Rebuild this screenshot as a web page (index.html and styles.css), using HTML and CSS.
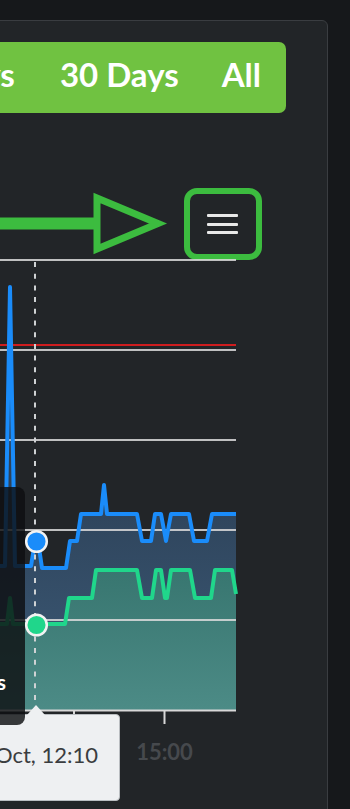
FILE: index.html
```html
<!DOCTYPE html>
<html lang="en">
<head>
<meta charset="utf-8">
<title>Chart</title>
<link rel="stylesheet" href="styles.css">
</head>
<body>
<div class="card">
  <div class="ranges">
    <span class="range range-first">7 Days</span>
    <span class="range">30 Days</span>
    <span class="range">All</span>
  </div>
  <div class="toolbar">
    <svg class="arrow" viewBox="0 0 170 72" width="170" height="72">
      <rect class="arrow-fill" x="0" y="29.5" width="98" height="12"/>
      <polygon class="arrow-head" points="97,10 97,61 158,35.5"/>
    </svg>
    <button class="menu-btn" type="button" aria-label="Chart menu">
      <span class="menu-line"></span>
      <span class="menu-line"></span>
      <span class="menu-line"></span>
    </button>
  </div>
  <div class="chart">
    <svg class="plot" width="240" height="549" viewBox="0 0 240 549">
      <defs>
        <linearGradient id="blueFill" gradientUnits="userSpaceOnUse" x1="0" y1="225" x2="0" y2="450">
          <stop offset="0" stop-color="#2d4259"/>
          <stop offset="1" stop-color="#3d5b78"/>
        </linearGradient>
        <linearGradient id="greenFill" gradientUnits="userSpaceOnUse" x1="0" y1="310" x2="0" y2="450">
          <stop offset="0" stop-color="#387670"/>
          <stop offset="1" stop-color="#4c8b86"/>
        </linearGradient>
      </defs>
      <path class="area-blue" d="M0,306 L5,306 L10,27 L15,306 L31,306 L35,281 L38,281 L42,308 L66,308 L70,281 L77,281 L81,254 L101,254 L104,225 L107,254 L137,254 L142,281 L151,281 L155,254 L161,254 L166,281 L171,254 L189,254 L194,281 L207,281 L212,254 L236,254 L236,450 L0,450 Z"/>
      <path class="area-green" d="M0,364 L7,364 L10,338 L13,364 L65,364 L69,338 L92,338 L96,310 L137,310 L142,338 L152,338 L156,310 L161,310 L165,338 L167,338 L171,310 L190,310 L195,338 L211,338 L215,310 L232,310 L236,334 L236,450 L0,450 Z"/>
      <g class="grid">
        <line x1="0" y1="0" x2="236" y2="0"/>
        <line x1="0" y1="90" x2="236" y2="90"/>
        <line x1="0" y1="180" x2="236" y2="180"/>
        <line x1="0" y1="270" x2="236" y2="270"/>
        <line x1="0" y1="360" x2="236" y2="360"/>
      </g>
      <line class="axis" x1="0" y1="450.5" x2="236" y2="450.5"/>
      <line class="tick" x1="164.5" y1="451" x2="164.5" y2="464"/>
      <line class="tick" x1="74" y1="451" x2="74" y2="454"/>
      <line class="threshold" x1="0" y1="85" x2="236" y2="85"/>
      <path class="line-blue" d="M0,306 L5,306 L10,27 L15,306 L31,306 L35,281 L38,281 L42,308 L66,308 L70,281 L77,281 L81,254 L101,254 L104,225 L107,254 L137,254 L142,281 L151,281 L155,254 L161,254 L166,281 L171,254 L189,254 L194,281 L207,281 L212,254 L236,254"/>
      <path class="line-green" d="M0,364 L7,364 L10,338 L13,364 L65,364 L69,338 L92,338 L96,310 L137,310 L142,338 L152,338 L156,310 L161,310 L165,338 L167,338 L171,310 L190,310 L195,338 L211,338 L215,310 L232,310 L236,334"/>
      <line class="crosshair" x1="35" y1="2" x2="35" y2="445"/>
      <circle class="dot-blue" cx="36.5" cy="281.5" r="10.3"/>
      <circle class="dot-green" cx="36.5" cy="365" r="10.3"/>
      <text class="axis-label" x="164.5" y="500">15:00</text>
    </svg>
    <div class="stamp">Oct, 12:10</div>
    <div class="tooltip"><span class="tooltip-text">12 Visits</span></div>
  </div>
</div>
</body>
</html>
```

FILE: styles.css
```css
html, body {
  margin: 0;
  padding: 0;
}

body {
  width: 350px;
  height: 809px;
  overflow: hidden;
  background: #16181b;
  padding-top: 20px;
  box-sizing: border-box;
  font-family: Lato, "Open Sans", "Liberation Sans", sans-serif;
}

.card {
  margin: 0 22px 0 -21px;
  padding: 21px 0 0 20px;
  height: 900px;
  box-sizing: border-box;
  border: 1px solid #3a3d41;
  border-radius: 6px;
  background: #222528;
}

.ranges {
  display: flex;
  justify-content: flex-end;
  gap: 43px;
  margin: 0 41px 0 -160px;
  height: 71px;
  padding: 0 25px 6px 0;
  box-sizing: border-box;
  background: #70c241;
  border-radius: 7px;
}

.range {
  flex-shrink: 0;
  line-height: 65px;
  font-size: 33px;
  font-weight: 700;
  color: #ffffff;
  white-space: nowrap;
}

.range-first {
  margin-right: 2px;
}

.toolbar {
  display: flex;
  align-items: center;
  height: 72px;
  margin-top: 75px;
}

.arrow {
  display: block;
  flex-shrink: 0;
}

.arrow-fill {
  fill: #3cbc3f;
}

.arrow-head {
  fill: none;
  stroke: #3cbc3f;
  stroke-width: 7;
  stroke-linejoin: miter;
}

.menu-btn {
  margin-left: 14px;
  width: 78px;
  height: 72px;
  box-sizing: border-box;
  padding: 0 2px 0 0;
  border: 6.5px solid #3cbc3f;
  border-radius: 13px;
  background: #222528;
  display: flex;
  flex-direction: column;
  align-items: center;
  justify-content: center;
  gap: 5.5px;
}

.menu-line {
  display: block;
  width: 31px;
  height: 3px;
  background: #e8e8e8;
  border-radius: 1px;
}

.chart {
  position: relative;
  width: 240px;
  height: 549px;
}

.plot {
  display: block;
  overflow: visible;
}

.area-blue {
  fill: url(#blueFill);
}

.area-green {
  fill: url(#greenFill);
}

.grid line {
  stroke: #dcdcdc;
  stroke-width: 1.8;
  opacity: 0.85;
}

.axis {
  stroke: #d8d8d8;
  stroke-width: 2;
}

.tick {
  stroke: #d8d8d8;
  stroke-width: 2;
}

.threshold {
  stroke: #cf1d1f;
  stroke-width: 2;
}

.line-blue {
  fill: none;
  stroke: #1a8cfa;
  stroke-width: 4;
  stroke-linejoin: round;
}

.line-green {
  fill: none;
  stroke: #20d68b;
  stroke-width: 4;
  stroke-linejoin: round;
}

.crosshair {
  stroke: #cfd2d4;
  stroke-width: 2;
  stroke-dasharray: 5 6.7;
}

.dot-blue {
  fill: #1a8cfa;
  stroke: #f2f2f2;
  stroke-width: 2.5;
}

.dot-green {
  fill: #20d68b;
  stroke: #f2f2f2;
  stroke-width: 2.5;
}

.axis-label {
  font-family: Lato, "Open Sans", sans-serif;
  font-size: 22px;
  font-weight: 700;
  fill: #46494d;
  text-anchor: middle;
}

.stamp {
  position: absolute;
  left: -100px;
  top: 454px;
  width: 220px;
  height: 87px;
  box-sizing: border-box;
  padding: 25px 21px 0 0;
  border: 1px solid #b9bdc1;
  border-radius: 4px;
  background: #eef0f2;
  text-align: right;
  font-size: 22px;
  line-height: 30px;
  color: #3a3d40;
  white-space: nowrap;
}

.stamp::before {
  content: "";
  position: absolute;
  left: 126px;
  top: -10px;
  width: 0;
  height: 0;
  border-left: 9px solid transparent;
  border-right: 9px solid transparent;
  border-bottom: 10px solid #eef0f2;
}

.tooltip {
  position: absolute;
  left: -200px;
  top: 227px;
  width: 225px;
  height: 238px;
  box-sizing: border-box;
  padding: 0 19px 30px 0;
  border-radius: 8px;
  background: rgba(14, 15, 17, 0.82);
  display: flex;
  flex-direction: column;
  justify-content: flex-end;
  align-items: flex-end;
}

.tooltip-text {
  font-size: 21px;
  font-weight: 700;
  line-height: 26px;
  color: #ffffff;
  white-space: nowrap;
}
```
